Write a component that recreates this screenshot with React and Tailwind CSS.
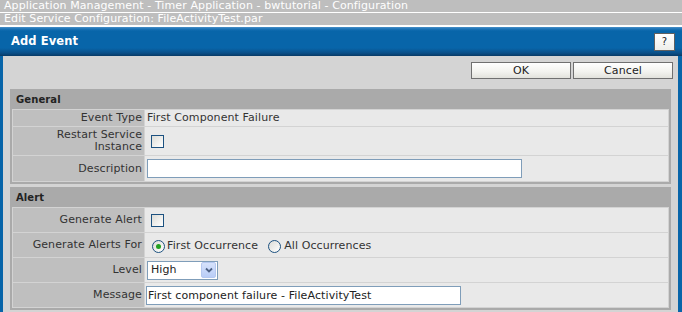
const Row = ({ label, h, children }) => (
  <>
    <div
      className={`${h} bg-[#bfbfbf] flex items-center justify-end pr-[2px] text-right leading-[12px] text-[#333]`}
    >
      {label}
    </div>
    <div className={`${h} bg-[#e9e9e9] flex items-center`}>{children}</div>
  </>
);

const Section = ({ title, children }) => (
  <div className="bg-[#aaaaaa] px-[2px] pb-[2px]">
    <div className="h-[20px] pl-[4px] pt-[1px] flex items-center text-[10px] font-bold text-[#222]">
      {title}
    </div>
    <div className="grid grid-cols-[131px_1fr] gap-px p-px bg-[#d3d3d3]">
      {children}
    </div>
  </div>
);

const Checkbox = () => (
  <div className="ml-[6px] w-[13px] h-[13px] border border-[#1c5180] bg-[linear-gradient(135deg,#dcdcd7,#ffffff)]" />
);

const Radio = ({ checked }) => (
  <div className="w-[13px] h-[13px] rounded-full border border-[#1c5180] bg-[linear-gradient(135deg,#dcdcd7,#ffffff)] flex items-center justify-center">
    {checked && <div className="w-[5px] h-[5px] rounded-full bg-[#21a121]" />}
  </div>
);

const Button = ({ children }) => (
  <button className="w-[100px] h-[17px] border border-[#707070] bg-[linear-gradient(to_bottom,#ffffff,#f2f2ee_60%,#e2e2dc)] text-[11px] leading-[15px] text-[#222]">
    {children}
  </button>
);

export default function App() {
  return (
    <div className="w-[682px] h-[312px] overflow-hidden bg-white font-['DejaVu_Sans',sans-serif] text-[11px] tracking-[0.1px]">
      <div className="h-[12px] bg-[#bebebe] pl-[4px] text-[11px] leading-[12px] text-white whitespace-nowrap">
        Application Management - Timer Application - bwtutorial - Configuration
      </div>
      <div className="mt-px h-[12px] bg-[#bebebe] pl-[4px] text-[11px] leading-[12px] text-white whitespace-nowrap">
        Edit Service Configuration: FileActivityTest.par
      </div>
      <div className="mt-[2px]">
        <div className="h-[29px] flex items-center justify-between pl-[11px] pr-[7px] bg-[linear-gradient(to_bottom,#4a90c8_0px,#1a72b6_2px,#0865a9_4px,#0865a9_21px,#0a4f88_26px,#073a66_29px)]">
          <span className="text-[11.5px] font-bold text-white">Add Event</span>
          <button className="w-[21px] h-[18px] border border-[#606060] bg-[linear-gradient(to_bottom,#ffffff,#eeeeea)] text-[10px] leading-[16px] text-[#222]">
            ?
          </button>
        </div>
        <div className="h-[256px] bg-[#d4d4d4] border-l-[3px] border-r-[4px] border-[#0865a9] px-[7px] pt-[6px]">
          <div className="flex justify-end gap-[2px] -mr-[2px]">
            <Button>OK</Button>
            <Button>Cancel</Button>
          </div>
          <div className="mt-[10px]">
            <Section title="General">
              <Row label="Event Type" h="h-[16px]">
                <span className="pl-[2px] text-[#333]">First Component Failure</span>
              </Row>
              <Row
                label={
                  <span>
                    Restart Service
                    <br />
                    Instance
                  </span>
                }
                h="h-[28px]"
              >
                <Checkbox />
              </Row>
              <Row label="Description" h="h-[25px]">
                <input
                  className="ml-[2px] w-[375px] h-[19px] border border-[#7f9db9] bg-white outline-none"
                  defaultValue=""
                />
              </Row>
            </Section>
          </div>
          <div className="mt-[3px]">
            <Section title="Alert">
              <Row label="Generate Alert" h="h-[24px]">
                <Checkbox />
              </Row>
              <Row label="Generate Alerts For" h="h-[24px]">
                <div className="flex items-center pl-[7px] pt-[2px] text-[#333]">
                  <Radio checked />
                  <span className="ml-[2px]">First Occurrence</span>
                  <span className="ml-[10px]">
                    <Radio />
                  </span>
                  <span className="ml-[3px]">All Occurrences</span>
                </div>
              </Row>
              <Row label="Level" h="h-[24px]">
                <div className="ml-[2px] w-[71px] h-[19px] border border-[#7f9db9] bg-white flex items-center justify-between pl-[3px] pr-px">
                  <span className="text-[#222]">High</span>
                  <div className="w-[15px] h-[16px] rounded-[2px] bg-[linear-gradient(to_bottom,#d6e2fb,#b9cdf7)] border border-[#b5c8f0] flex items-center justify-center">
                    <svg width="8" height="6" viewBox="0 0 8 6">
                      <path d="M1 1.5 L4 4.5 L7 1.5" stroke="#4d6185" strokeWidth="1.8" fill="none" />
                    </svg>
                  </div>
                </div>
              </Row>
              <Row label="Message" h="h-[24px]">
                <input
                  className="ml-px w-[315px] h-[19px] border border-[#7f9db9] bg-white pl-px text-[11px] tracking-[0.1px] text-[#222] outline-none"
                  defaultValue="First component failure - FileActivityTest"
                />
              </Row>
            </Section>
          </div>
        </div>
      </div>
    </div>
  );
}
